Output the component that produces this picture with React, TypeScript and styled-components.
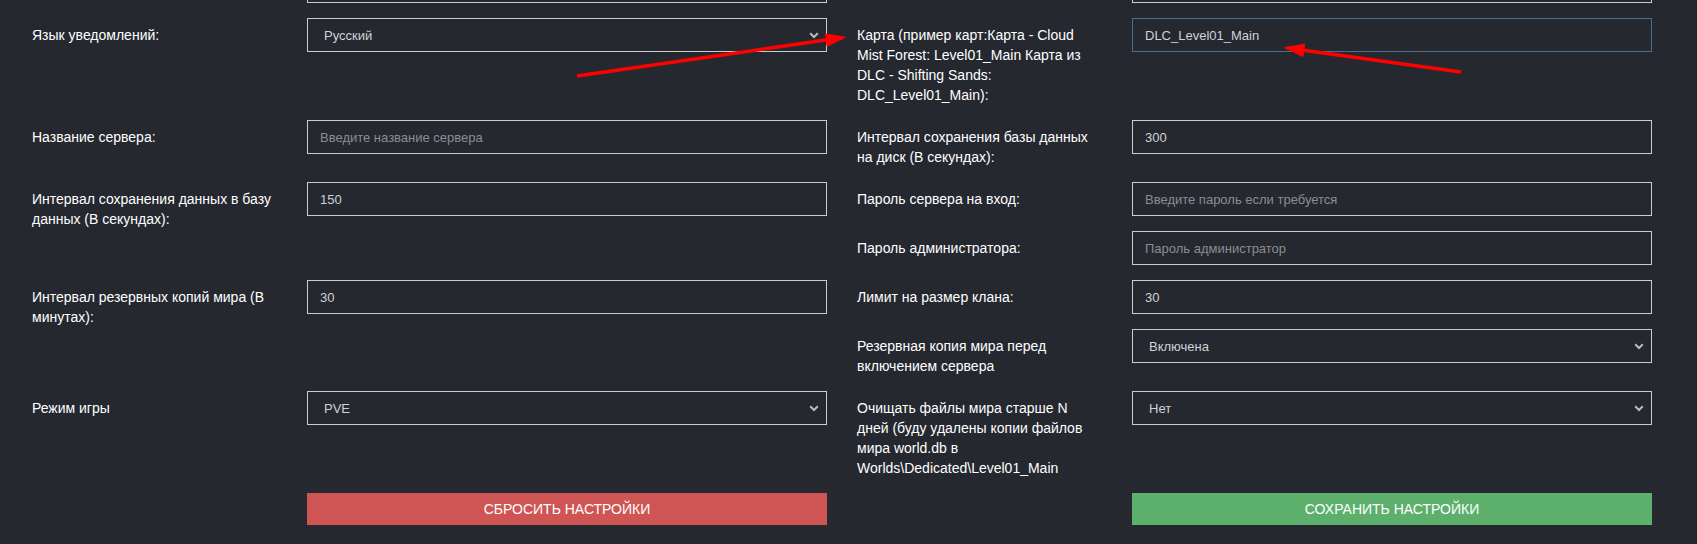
import { useEffect, useRef } from "react";
import styled, { createGlobalStyle } from "styled-components";

const GlobalStyle = createGlobalStyle`
  html, body {
    margin: 0;
    padding: 0;
    background: #25282f;
  }
  body {
    height: 544px;
    overflow: hidden;
    font-family: "Liberation Sans", Arial, sans-serif;
    font-size: 14px;
    line-height: 20px;
    color: #ffffff;
  }
  * {
    box-sizing: border-box;
  }
`;

const Page = styled.div`
  position: relative;
  height: 544px;
  overflow: hidden;
`;

const Form = styled.form`
  margin-top: -31px;
  padding: 0 30px 0 17px;
`;

const Row = styled.div`
  display: grid;
  grid-template-columns: 1fr 1fr;
`;

const Half = styled.div`
  display: flex;
  flex-direction: column;
`;

const Field = styled.div`
  display: grid;
  grid-template-columns: 1fr 2fr;
  margin-bottom: 15px;
`;

const Label = styled.label`
  padding: 7px 15px 0;
  font-weight: 400;
  color: #ffffff;
`;

const Control = styled.div`
  position: relative;
  padding: 0 15px;
`;

const Input = styled.input`
  display: block;
  width: 100%;
  height: 34px;
  padding: 6px 12px;
  font-family: "Liberation Sans", Arial, sans-serif;
  font-size: 13px;
  color: #cfd2d6;
  caret-color: #e0e0e0;
  background: #25282f;
  border: 1px solid #cccccc;
  border-radius: 0;
  outline: none;

  &::placeholder {
    color: #8b8d91;
  }

  &:focus {
    border-color: #4f6c8f;
  }
`;

const Select = styled.select`
  display: block;
  width: 100%;
  height: 34px;
  padding: 6px 28px 6px 16px;
  font-family: "Liberation Sans", Arial, sans-serif;
  font-size: 13px;
  color: #cfd2d6;
  background: #25282f;
  border: 1px solid #cccccc;
  border-radius: 0;
  outline: none;
  appearance: none;
`;

const Chevron = styled.svg`
  position: absolute;
  right: 23px;
  top: 14px;
  pointer-events: none;
`;

const Button = styled.button<{ $tone: "danger" | "success" }>`
  display: block;
  width: 100%;
  height: 32px;
  padding: 6px 12px;
  font-family: "Liberation Sans", Arial, sans-serif;
  font-size: 14px;
  line-height: 20px;
  text-transform: uppercase;
  color: #ffffff;
  border: none;
  border-radius: 0;
  background: ${({ $tone }) => ($tone === "danger" ? "#cf5454" : "#5daf6c")};
`;

const Annotations = styled.svg`
  position: absolute;
  left: 0;
  top: 0;
  pointer-events: none;
`;

type FieldDef = {
  label: string;
  value?: string;
  placeholder?: string;
  options?: string[];
  focus?: boolean;
};

const SelectBox = ({ options }: { options: string[] }) => (
  <>
    <Select defaultValue={options[0]}>
      {options.map((o) => (
        <option key={o}>{o}</option>
      ))}
    </Select>
    <Chevron width="10" height="7" viewBox="0 0 10 7">
      <path d="M1.2 1.2 5 5 8.8 1.2" fill="none" stroke="#b9bbbf" strokeWidth="2" />
    </Chevron>
  </>
);

const FocusInput = ({ value }: { value: string }) => {
  const ref = useRef<HTMLInputElement>(null);
  useEffect(() => {
    const el = ref.current;
    if (el) {
      el.focus();
      el.setSelectionRange(value.length, value.length);
    }
  }, [value]);
  return <Input ref={ref} type="text" defaultValue={value} />;
};

const FormField = ({ f }: { f: FieldDef }) => (
  <Field>
    <Label>{f.label}</Label>
    <Control>
      {f.options ? (
        <SelectBox options={f.options} />
      ) : f.focus ? (
        <FocusInput value={f.value || ""} />
      ) : (
        <Input type="text" defaultValue={f.value} placeholder={f.placeholder} />
      )}
    </Control>
  </Field>
);

// first row is scrolled out of view, only the bottom edge of its inputs shows
const rows: [FieldDef[], FieldDef[]][] = [
  [[{ label: "", value: "" }], [{ label: "", value: "" }]],
  [
    [{ label: "Язык уведомлений:", options: ["Русский", "English"] }],
    [
      {
        label:
          "Карта (пример карт:Карта - Cloud Mist Forest: Level01_Main Карта из DLC - Shifting Sands: DLC_Level01_Main):",
        value: "DLC_Level01_Main",
        focus: true,
      },
    ],
  ],
  [
    [{ label: "Название сервера:", placeholder: "Введите название сервера" }],
    [{ label: "Интервал сохранения базы данных на диск (В секундах):", value: "300" }],
  ],
  [
    [{ label: "Интервал сохранения данных в базу данных (В секундах):", value: "150" }],
    [
      { label: "Пароль сервера на вход:", placeholder: "Введите пароль если требуется" },
      { label: "Пароль администратора:", placeholder: "Пароль администратор" },
    ],
  ],
  [
    [{ label: "Интервал резервных копий мира (В минутах):", value: "30" }],
    [
      { label: "Лимит на размер клана:", value: "30" },
      { label: "Резервная копия мира перед включением сервера", options: ["Включена", "Выключена"] },
    ],
  ],
  [
    [{ label: "Режим игры", options: ["PVE", "PVP"] }],
    [
      {
        label:
          "Очищать файлы мира старше N дней (буду удалены копии файлов мира world.db в Worlds\\Dedicated\\Level01_Main",
        options: ["Нет", "7", "14", "30"],
      },
    ],
  ],
];

export default function App() {
  return (
    <Page>
      <GlobalStyle />
      <Form onSubmit={(e) => e.preventDefault()}>
        {rows.map(([left, right], i) => (
          <Row key={i}>
            <Half>
              {left.map((f, j) => (
                <FormField key={j} f={f} />
              ))}
            </Half>
            <Half>
              {right.map((f, j) => (
                <FormField key={j} f={f} />
              ))}
            </Half>
          </Row>
        ))}
        <Row>
          <Field>
            <Label as="span" />
            <Control>
              <Button type="button" $tone="danger">Сбросить настройки</Button>
            </Control>
          </Field>
          <Field>
            <Label as="span" />
            <Control>
              <Button type="submit" $tone="success">Сохранить настройки</Button>
            </Control>
          </Field>
        </Row>
      </Form>
      <Annotations width="1697" height="544" viewBox="0 0 1697 544">
        <defs>
          <marker id="head" markerWidth="6" markerHeight="4" refX="5" refY="2" orient="auto" markerUnits="strokeWidth">
            <path d="M0 0 L6 2 L0 4 Z" fill="#ff0000" />
          </marker>
        </defs>
        <line x1="577" y1="76" x2="843" y2="37.5" stroke="#ff0000" strokeWidth="3.5" markerEnd="url(#head)" />
        <line x1="1461" y1="72" x2="1287" y2="48" stroke="#ff0000" strokeWidth="3.5" markerEnd="url(#head)" />
      </Annotations>
    </Page>
  );
}
